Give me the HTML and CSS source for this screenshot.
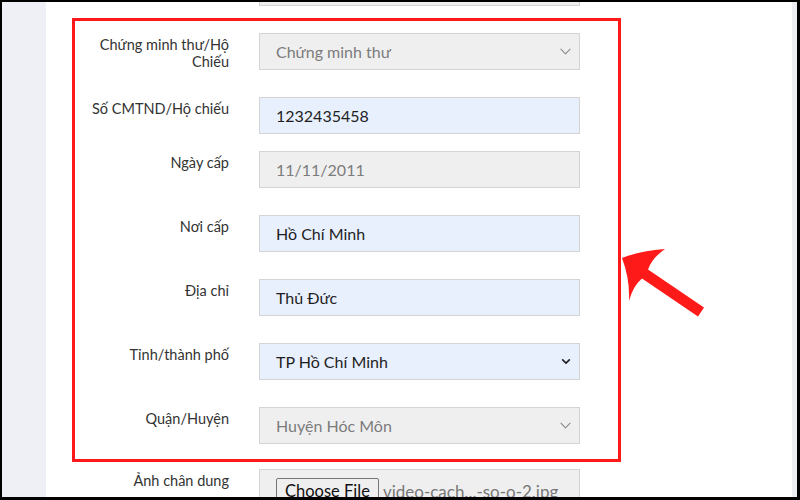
FILE: index.html
```html
<!DOCTYPE html>
<html lang="vi">
<head>
    <meta charset="UTF-8">
    <meta name="viewport" content="width=device-width, initial-scale=1.0">
    <title>Thông tin cá nhân</title>
    <link rel="stylesheet" href="styles.css">
</head>
<body>
    <div class="screen">
        <aside class="sidebar"></aside>

        <main class="content">
            <div class="row row-prev">
                <span class="label"></span>
                <div class="field disabled"></div>
            </div>

            <div class="highlight">
                <div class="row">
                    <span class="label">Chứng minh thư/Hộ Chiếu</span>
                    <div class="field disabled select">
                        <span>Chứng minh thư</span>
                        <svg class="chevron light" viewBox="0 0 12 7"><path d="M1 1l5 5 5-5"/></svg>
                    </div>
                </div>
                <div class="row tight">
                    <span class="label">Số CMTND/Hộ chiếu</span>
                    <div class="field filled"><span>1232435458</span></div>
                </div>
                <div class="row">
                    <span class="label">Ngày cấp</span>
                    <div class="field disabled"><span>11/11/2011</span></div>
                </div>
                <div class="row">
                    <span class="label">Nơi cấp</span>
                    <div class="field filled"><span>Hồ Chí Minh</span></div>
                </div>
                <div class="row">
                    <span class="label">Địa chỉ</span>
                    <div class="field filled"><span>Thủ Đức</span></div>
                </div>
                <div class="row">
                    <span class="label">Tỉnh/thành phố</span>
                    <div class="field filled select">
                        <span>TP Hồ Chí Minh</span>
                        <svg class="chevron dark" viewBox="0 0 12 7"><path d="M2 1.5l4 4 4-4"/></svg>
                    </div>
                </div>
                <div class="row last">
                    <span class="label">Quận/Huyện</span>
                    <div class="field disabled select">
                        <span>Huyện Hóc Môn</span>
                        <svg class="chevron light" viewBox="0 0 12 7"><path d="M1 1l5 5 5-5"/></svg>
                    </div>
                </div>
            </div>

            <div class="row row-file">
                <span class="label">Ảnh chân dung</span>
                <div class="field disabled file">
                    <span class="file-btn">Choose File</span>
                    <span class="file-name">video-cach...-so-o-2.jpg</span>
                </div>
            </div>
        </main>

        <div class="scrollbar"></div>

        <!-- annotation arrow -->
        <svg class="arrow" viewBox="618 246 100 80" width="100" height="80">
            <path d="M622 258 Q640 251 665 249 Q652 258 648 269.5 L704 307.5 L698 316.5 L642 278.5 Q633 286 629 301 Q630 279 622 258 Z"/>
        </svg>
    </div>
</body>
</html>
```

FILE: styles.css
```css
* {
    box-sizing: border-box;
}
body {
    margin: 0;
    background-color: #000;
    font-family: Lato, "Noto Sans", Arial, sans-serif;
}
.screen {
    position: relative;
    display: flex;
    margin: 2px 3px 3px 2px;
    height: 495px;
    overflow: hidden;
    background-color: #fff;
}
.sidebar {
    width: 44px;
    flex-shrink: 0;
    background-color: #eff0f5;
}
.scrollbar {
    width: 5px;
    flex-shrink: 0;
    background-color: #eceef3;
}
.content {
    flex: 1;
    padding-left: 26px;
}
.row {
    display: grid;
    grid-template-columns: 154px 321px;
    column-gap: 30px;
    margin-bottom: 27px;
}
.row.tight {
    margin-bottom: 17px;
}
.row.last {
    margin-bottom: 0;
}
.row-prev {
    margin-top: -33px;
    margin-bottom: 12px;
    padding-left: 3px;
}
.row-file {
    margin-top: 7px;
    padding-left: 3px;
}
.label {
    text-align: right;
    font-size: 14.5px;
    line-height: 17px;
    color: #333;
    padding-top: 3px;
}
.highlight {
    width: 549px;
    border: 3px solid #ff1a1a;
    padding: 12px 0 15px 0;
}
.field {
    display: flex;
    align-items: center;
    height: 37px;
    padding: 0 16px;
    border: 1px solid #d4d4d4;
    font-size: 16px;
    color: #1e1e1e;
}
.field.disabled {
    background-color: #efefef;
    color: #7c7c7c;
}
.field.filled {
    background-color: #e8f0fe;
}
.field.select {
    justify-content: space-between;
    padding-right: 8px;
}
.chevron {
    width: 11px;
    height: 7px;
    fill: none;
    stroke-linecap: round;
    stroke-linejoin: round;
}
.chevron.light {
    stroke: #8a8a8a;
    stroke-width: 1.2;
}
.chevron.dark {
    width: 10px;
    stroke: #222;
    stroke-width: 2;
}
.field.file {
    align-items: flex-start;
    padding: 8px 0 0 16px;
    height: 40px;
}
.file-btn {
    padding: 2px 8px;
    border: 1px solid #767676;
    border-radius: 2px;
    background-color: #efefef;
    color: #111;
    font-size: 16.5px;
}
.file-name {
    margin-left: 4px;
    padding-top: 3px;
    font-size: 17px;
    color: #777;
}
.arrow {
    position: absolute;
    left: 616px;
    top: 244px;
}
.arrow path {
    fill: #ff1a1a;
}
```
